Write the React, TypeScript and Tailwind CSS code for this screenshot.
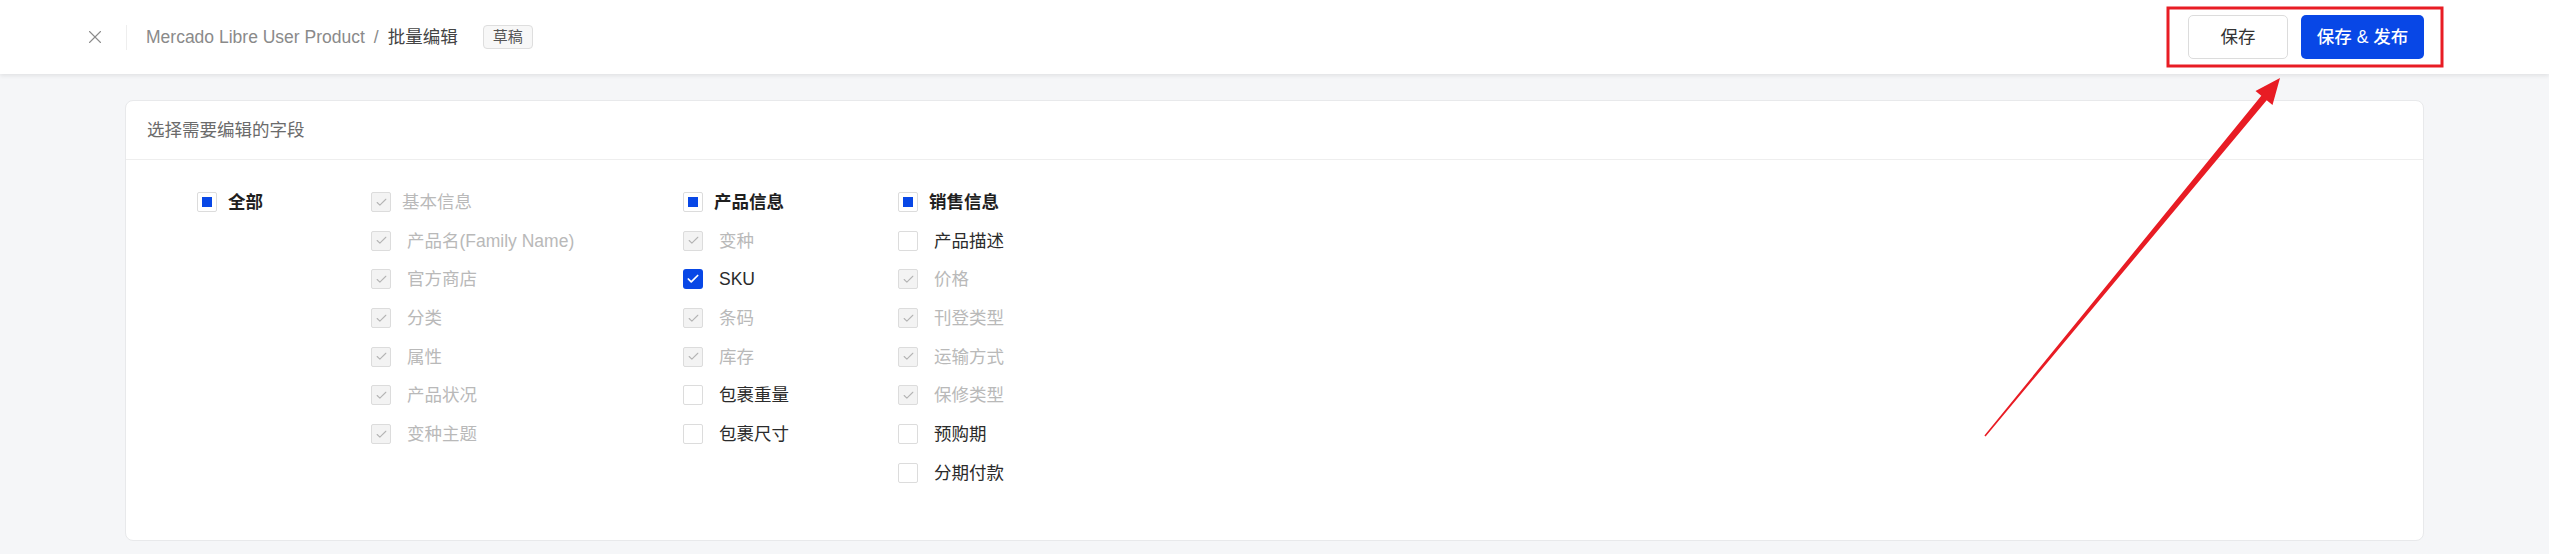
import { X, Check } from 'lucide-react';

type State = 'indeterminate' | 'disabled' | 'checked' | 'unchecked';

type Field = { label: string; state: State };

type Group = { title: Field; items: Field[]; width: string };

const groups: Group[] = [
  {
    title: { label: '基本信息', state: 'disabled' },
    width: 'w-[312px]',
    items: [
      { label: '产品名(Family Name)', state: 'disabled' },
      { label: '官方商店', state: 'disabled' },
      { label: '分类', state: 'disabled' },
      { label: '属性', state: 'disabled' },
      { label: '产品状况', state: 'disabled' },
      { label: '变种主题', state: 'disabled' },
    ],
  },
  {
    title: { label: '产品信息', state: 'indeterminate' },
    width: 'w-[215px]',
    items: [
      { label: '变种', state: 'disabled' },
      { label: 'SKU', state: 'checked' },
      { label: '条码', state: 'disabled' },
      { label: '库存', state: 'disabled' },
      { label: '包裹重量', state: 'unchecked' },
      { label: '包裹尺寸', state: 'unchecked' },
    ],
  },
  {
    title: { label: '销售信息', state: 'indeterminate' },
    width: 'w-[215px]',
    items: [
      { label: '产品描述', state: 'unchecked' },
      { label: '价格', state: 'disabled' },
      { label: '刊登类型', state: 'disabled' },
      { label: '运输方式', state: 'disabled' },
      { label: '保修类型', state: 'disabled' },
      { label: '预购期', state: 'unchecked' },
      { label: '分期付款', state: 'unchecked' },
    ],
  },
];

const Box = ({ state }: { state: State }) => {
  if (state === 'checked') {
    return (
      <span className="flex h-[20px] w-[20px] shrink-0 items-center justify-center rounded-[3px] bg-[#0847e6]">
        <Check size={14} strokeWidth={3} color="#ffffff" />
      </span>
    );
  }
  if (state === 'disabled') {
    return (
      <span className="flex h-[20px] w-[20px] shrink-0 items-center justify-center rounded-[2px] border border-[#dcdcdc] bg-[#f3f3f3]">
        <Check size={13} strokeWidth={2} color="#b4b4b4" />
      </span>
    );
  }
  return (
    <span className="flex h-[20px] w-[20px] shrink-0 items-center justify-center rounded-[2px] border border-[#dcdcdc] bg-white">
      {state === 'indeterminate' && <span className="h-[10px] w-[10px] bg-[#0847e6]" />}
    </span>
  );
};

const Row = ({ field, head }: { field: Field; head?: boolean }) => {
  const color =
    field.state === 'disabled'
      ? 'text-[#b9b9b9]'
      : head
        ? 'text-[#1f1f1f] font-bold'
        : 'text-[#2b2b2b]';
  return (
    <div className="flex h-[20px] items-center">
      <Box state={field.state} />
      <span className={`${head ? 'ml-[11px]' : 'ml-[16px]'} whitespace-nowrap leading-[20px] ${color}`}>
        {field.label}
      </span>
    </div>
  );
};

export default function App() {
  return (
    <div
      className="relative min-h-[554px] w-full bg-[#f5f6f8] text-[17.5px]"
      style={{ fontFamily: '"Liberation Sans", "Noto Sans CJK SC", sans-serif' }}
    >
      <header className="flex h-[74px] items-center justify-between bg-white pl-[84px] pr-[125px] shadow-[0_2px_4px_rgba(0,0,0,0.08)]">
        <div className="flex items-center">
          <X size={22} strokeWidth={1.2} color="#8c8c8c" />
          <div className="ml-[20px] h-[25px] w-px bg-[#eeeeee]" />
          <span className="ml-[19px] text-[#8a8a8a]">Mercado Libre User Product</span>
          <span className="mx-[9px] text-[#8a8a8a]">/</span>
          <span className="font-normal text-[#444444]">批量编辑</span>
          <span className="ml-[25px] flex h-[24px] items-center rounded-[4px] border border-[#dedede] bg-[#f7f7f7] px-[9px] text-[15px] text-[#555555]">
            草稿
          </span>
        </div>
        <div className="flex items-center gap-[13px]">
          <button className="h-[44px] w-[100px] rounded-[5px] border border-[#dcdcdc] bg-white text-[#333333]">
            保存
          </button>
          <button className="h-[44px] w-[123px] rounded-[5px] bg-[#0847e6] font-medium text-white">
            保存 &amp; 发布
          </button>
        </div>
      </header>

      <div className="mx-[125px] mt-[26px] rounded-[8px] border border-[#e8e9eb] bg-white">
        <div className="flex h-[59px] items-center border-b border-[#eeeeee] px-[21px] text-[#6b6b6b]">
          选择需要编辑的字段
        </div>
        <div className="flex pb-[57px] pl-[71px] pt-[32px]">
          <div className="w-[174px]">
            <Row field={{ label: '全部', state: 'indeterminate' }} head />
          </div>
          {groups.map((g) => (
            <div key={g.title.label} className={`${g.width} flex flex-col gap-[18.7px]`}>
              <Row field={g.title} head />
              {g.items.map((f) => (
                <Row key={f.label} field={f} />
              ))}
            </div>
          ))}
        </div>
      </div>

      <svg className="pointer-events-none absolute left-0 top-0" width="2549" height="554">
        <rect x="2168" y="8" width="274" height="58" fill="none" stroke="#e81c24" strokeWidth="3" />
        <polygon
          fill="#e81c24"
          points="1984.4,435.5 2261.3,95.8 2255.5,91 2280,78 2272.5,105 2266.7,100.2 1985.6,436.5"
        />
      </svg>
    </div>
  );
}
